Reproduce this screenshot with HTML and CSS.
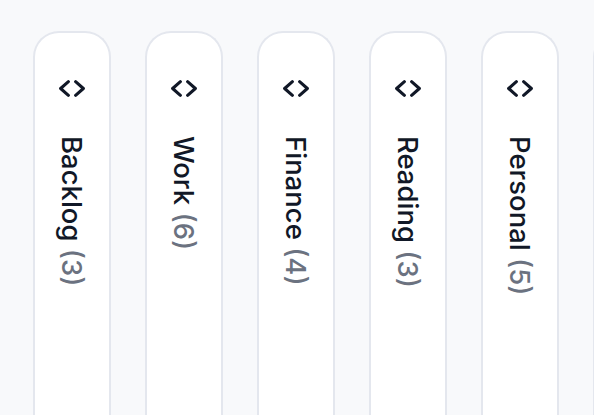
FILE: index.html
```html
<!DOCTYPE html>
<html lang="en">
<head>
    <meta charset="UTF-8">
    <meta name="viewport" content="width=device-width, initial-scale=1.0">
    <title>Board</title>
    <link rel="stylesheet" href="styles.css">
</head>
<body>

    <div class="board">
        <div class="column">
            <svg class="expand" viewBox="0 0 26 16" width="28" height="17"><polyline points="9.6 1.6 2.3 8 9.6 14.4"/><polyline points="16.4 1.6 23.7 8 16.4 14.4"/></svg>
            <div class="title">Backlog <span class="count">(3)</span></div>
        </div>
        <div class="column">
            <svg class="expand" viewBox="0 0 26 16" width="28" height="17"><polyline points="9.6 1.6 2.3 8 9.6 14.4"/><polyline points="16.4 1.6 23.7 8 16.4 14.4"/></svg>
            <div class="title">Work <span class="count">(6)</span></div>
        </div>
        <div class="column">
            <svg class="expand" viewBox="0 0 26 16" width="28" height="17"><polyline points="9.6 1.6 2.3 8 9.6 14.4"/><polyline points="16.4 1.6 23.7 8 16.4 14.4"/></svg>
            <div class="title">Finance <span class="count">(4)</span></div>
        </div>
        <div class="column">
            <svg class="expand" viewBox="0 0 26 16" width="28" height="17"><polyline points="9.6 1.6 2.3 8 9.6 14.4"/><polyline points="16.4 1.6 23.7 8 16.4 14.4"/></svg>
            <div class="title">Reading <span class="count">(3)</span></div>
        </div>
        <div class="column">
            <svg class="expand" viewBox="0 0 26 16" width="28" height="17"><polyline points="9.6 1.6 2.3 8 9.6 14.4"/><polyline points="16.4 1.6 23.7 8 16.4 14.4"/></svg>
            <div class="title">Personal <span class="count">(5)</span></div>
        </div>
        <!-- next column, only its edge shows -->
        <div class="column"></div>
    </div>

</body>
</html>
```

FILE: styles.css
```css
html, body {
    height: 100%;
}
body {
    font-family: Inter, "Noto Sans", sans-serif;
    margin: 0;
    background-color: #f8f9fb;
    overflow: hidden;
}
.board {
    display: flex;
    gap: 34px;
    padding: 31px 0 0 33px;
}
.column {
    flex-shrink: 0;
    box-sizing: border-box;
    width: 78px;
    height: 384px;
    background-color: white;
    border: 2px solid #e4e7ee;
    border-bottom: none;
    border-radius: 26px 26px 0 0;
    display: flex;
    flex-direction: column;
    align-items: center;
    padding-top: 47px;
}
.expand {
    display: block;
    fill: none;
    stroke: #111827;
    stroke-width: 2.9;
    stroke-linecap: round;
    stroke-linejoin: round;
}
.title {
    margin-top: 39px;
    writing-mode: vertical-rl;
    font-size: 27.5px;
    font-weight: 500;
    color: #111827;
    white-space: nowrap;
}
.count {
    color: #6b7280;
}
```
